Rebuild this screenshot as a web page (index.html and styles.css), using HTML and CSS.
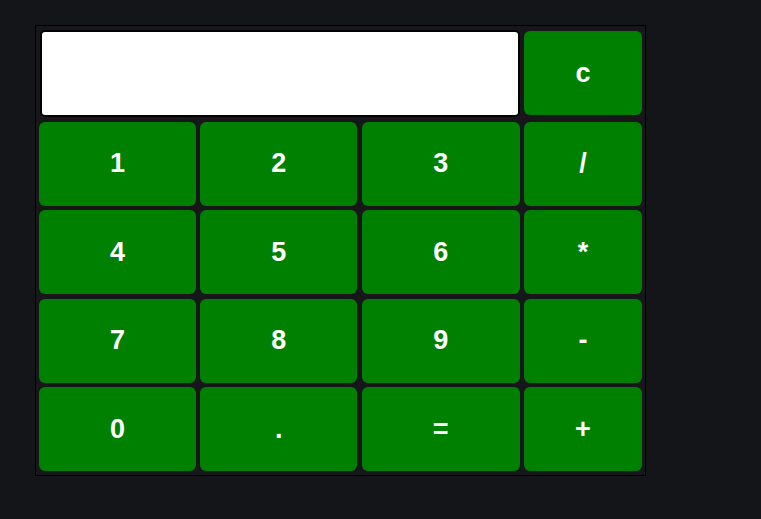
FILE: index.html
```html
<!DOCTYPE html>
<html>
<head>
<meta charset="utf-8">
<link rel="stylesheet" href="styles.css">
</head>
<body>
<div class="calc">
  <input class="display" type="text" value="">
  <button class="btn btn-clear">c</button>
  <button class="btn">1</button>
  <button class="btn">2</button>
  <button class="btn">3</button>
  <button class="btn">/</button>
  <button class="btn">4</button>
  <button class="btn">5</button>
  <button class="btn">6</button>
  <button class="btn">*</button>
  <button class="btn">7</button>
  <button class="btn">8</button>
  <button class="btn">9</button>
  <button class="btn">-</button>
  <button class="btn">0</button>
  <button class="btn">.</button>
  <button class="btn">=</button>
  <button class="btn">+</button>
</div>
</body>
</html>
```
FILE: styles.css
```css
html, body {
  margin: 0;
  padding: 0;
  background: #141519;
  height: 100%;
}
body {
  padding: 25px 0 0 35px;
  box-sizing: border-box;
  font-family: "Liberation Sans", Arial, sans-serif;
}
.calc {
  display: grid;
  width: 611px;
  box-sizing: border-box;
  border: 1px solid #000;
  background: #17171b;
  padding: 4px 3px 4px 3px;
  grid-template-columns: 157px 157px 158px 118px;
  grid-template-rows: 87px 84px 84px 84px 84px;
  column-gap: 4.33px;
  row-gap: 4.5px;
}
.display {
  grid-column: 1 / 4;
  margin: 0 0 0 1px;
  height: 87px;
  box-sizing: border-box;
  border: 2px solid #000;
  border-radius: 5px;
  background: #fff;
  outline: none;
  font-size: 26px;
}
.btn {
  height: 84px;
  align-self: center;
  border: none;
  border-radius: 6px;
  background: #008000;
  color: #fff;
  font-family: "Liberation Sans", Arial, sans-serif;
  font-weight: bold;
  font-size: 27px;
  padding: 0;
}
.btn-clear {
  align-self: start;
  margin-top: 1px;
}
```
